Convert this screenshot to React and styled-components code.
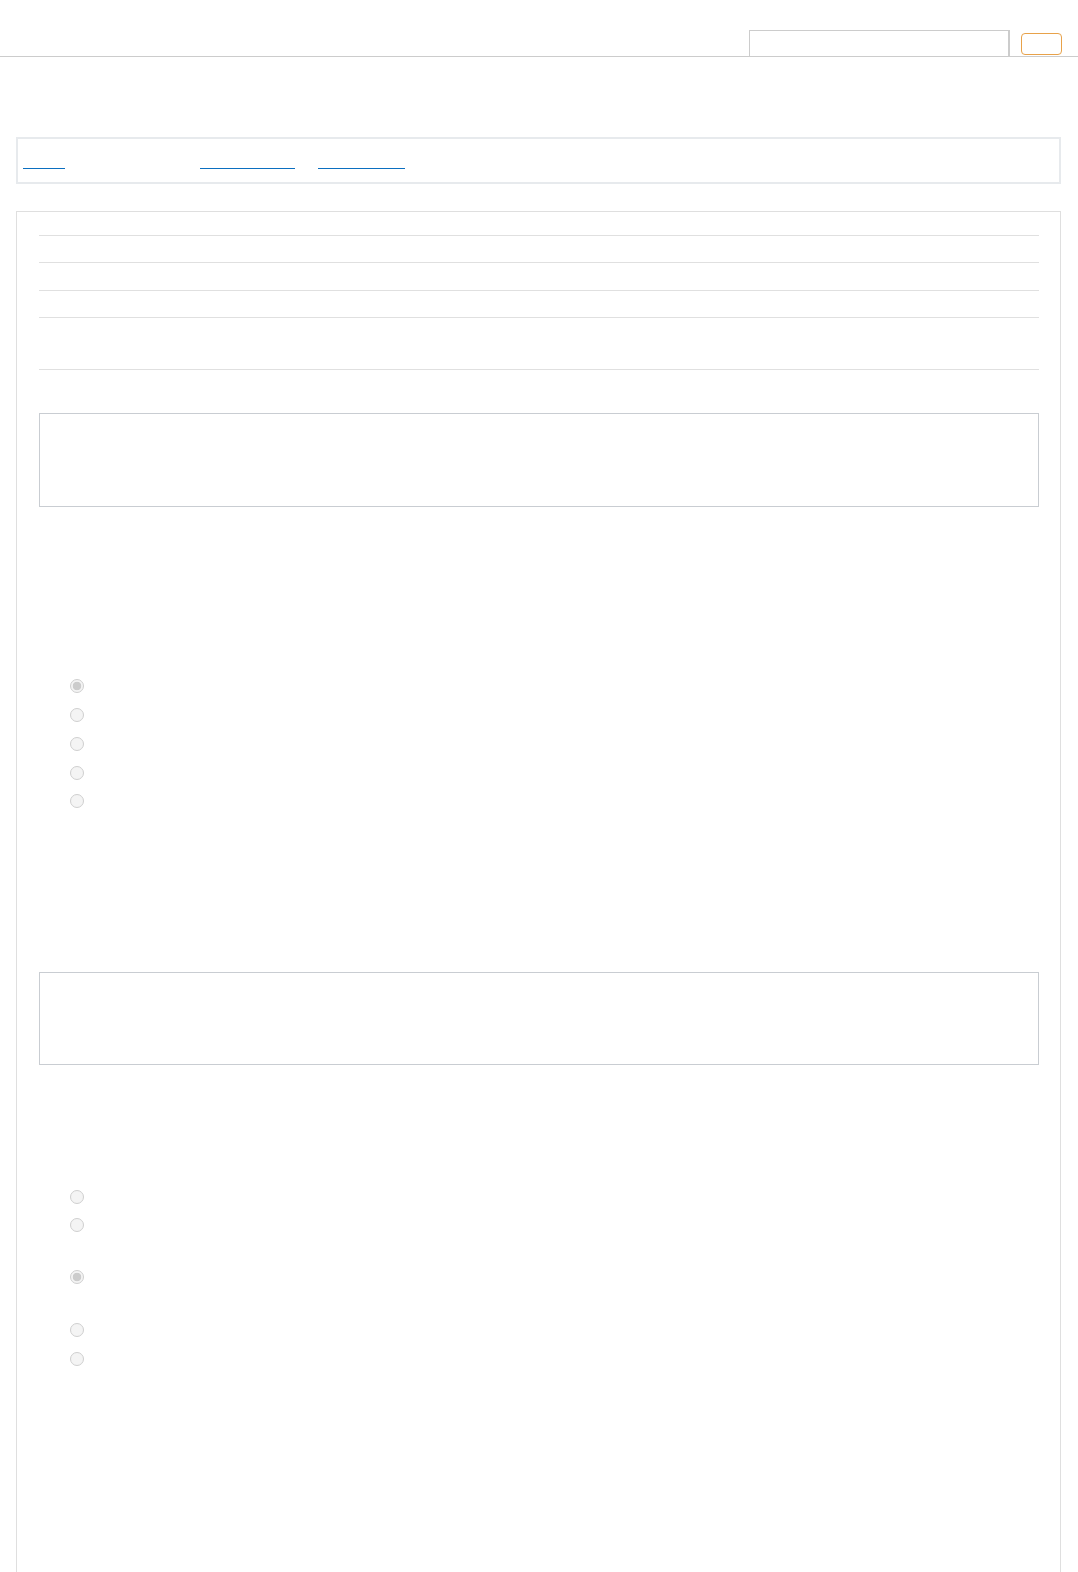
import React from 'react';
import styled, {createGlobalStyle} from 'styled-components';

const GlobalStyle = createGlobalStyle`
    html, body {
        margin: 0;
        padding: 0;
        background: #ffffff;
        font-family: "Liberation Sans", Arial, sans-serif;
    }
    * {
        box-sizing: border-box;
    }
`;

const Header = styled.header`
    display: flex;
    justify-content: flex-end;
    align-items: flex-end;
    gap: 11px;
    height: 57px;
    padding-right: 16px;
    border-bottom: 1px solid #cccccc;
`;

const SearchInput = styled.input`
    width: 261px;
    height: 26px;
    border: 1px solid #cccccc;
    border-right: 2px solid #cccccc;
    border-bottom: none;
    background: #ffffff;
    outline: none;
`;

const SearchButton = styled.button`
    width: 41px;
    height: 22px;
    margin-bottom: 1px;
    border: 1px solid #e8a24a;
    border-radius: 4px;
    background: #ffffff;
`;

const Page = styled.main`
    padding: 80px 17px 0 16px;
`;

const NavBox = styled.nav`
    display: flex;
    align-items: flex-start;
    height: 47px;
    padding: 16px 5px 0;
    border: 2px solid #e7eaed;
`;

const NavLink = styled.a`
    display: block;
    width: ${p => p.$w}px;
    height: 14px;
    margin-left: ${p => p.$offset || 0}px;
    border-bottom: 1px solid #0b6fc0;
`;

const MainBox = styled.section`
    height: 1361px;
    margin-top: 27px;
    padding: 23px 21px 0 22px;
    border: 1px solid #dfdfdf;
    border-bottom: none;
`;

const Table = styled.div`
    display: flex;
    flex-direction: column;
    border-bottom: 1px solid #e0e0e0;
`;

const Row = styled.div`
    height: ${p => p.$h}px;
    border-top: 1px solid #e0e0e0;
`;

const TextBox = styled.div`
    height: ${p => p.$h}px;
    margin-top: ${p => p.$top}px;
    border: 1px solid #c9cdd2;
`;

const RadioGroup = styled.div`
    display: flex;
    flex-direction: column;
    margin-top: ${p => p.$top}px;
    padding-left: 31px;
`;

const Option = styled.label`
    display: flex;
    align-items: flex-start;
    height: ${p => p.$h}px;
`;

const Radio = styled.span`
    width: 14px;
    height: 14px;
    margin-top: 7px;
    border-radius: 50%;
    border: 1px solid #cfcfcf;
    background: ${p => p.$checked
        ? 'radial-gradient(circle, #cccccc 0 4px, #f4f4f4 4.6px)'
        : '#f4f4f4'};
`;

const groupOne = [
    {h: 28.5, checked: true},
    {h: 29},
    {h: 29},
    {h: 28},
    {h: 28},
];

const groupTwo = [
    {h: 28.6},
    {h: 51.7},
    {h: 53, checked: true},
    {h: 29},
    {h: 29},
];

const Choices = ({items, top}) => (
    <RadioGroup $top={top}>
        {items.map((item, i) => (
            <Option key={i} $h={item.h}>
                <Radio $checked={item.checked} />
            </Option>
        ))}
    </RadioGroup>
);

const App = () => {
    return (
        <>
            <GlobalStyle />
            <Header>
                <SearchInput type="text" />
                <SearchButton type="button" />
            </Header>
            <Page>
                <NavBox>
                    <NavLink $w={42} />
                    <NavLink $w={95} $offset={135} />
                    <NavLink $w={87} $offset={23} />
                </NavBox>
                <MainBox>
                    <Table>
                        <Row $h={27} />
                        <Row $h={28} />
                        <Row $h={27} />
                        <Row $h={52} />
                    </Table>
                    <TextBox $top={43} $h={94} />
                    <Choices items={groupOne} top={165} />
                    <TextBox $top={157.5} $h={93} />
                    <Choices items={groupTwo} top={117.7} />
                </MainBox>
            </Page>
        </>
    );
};

export default App;
